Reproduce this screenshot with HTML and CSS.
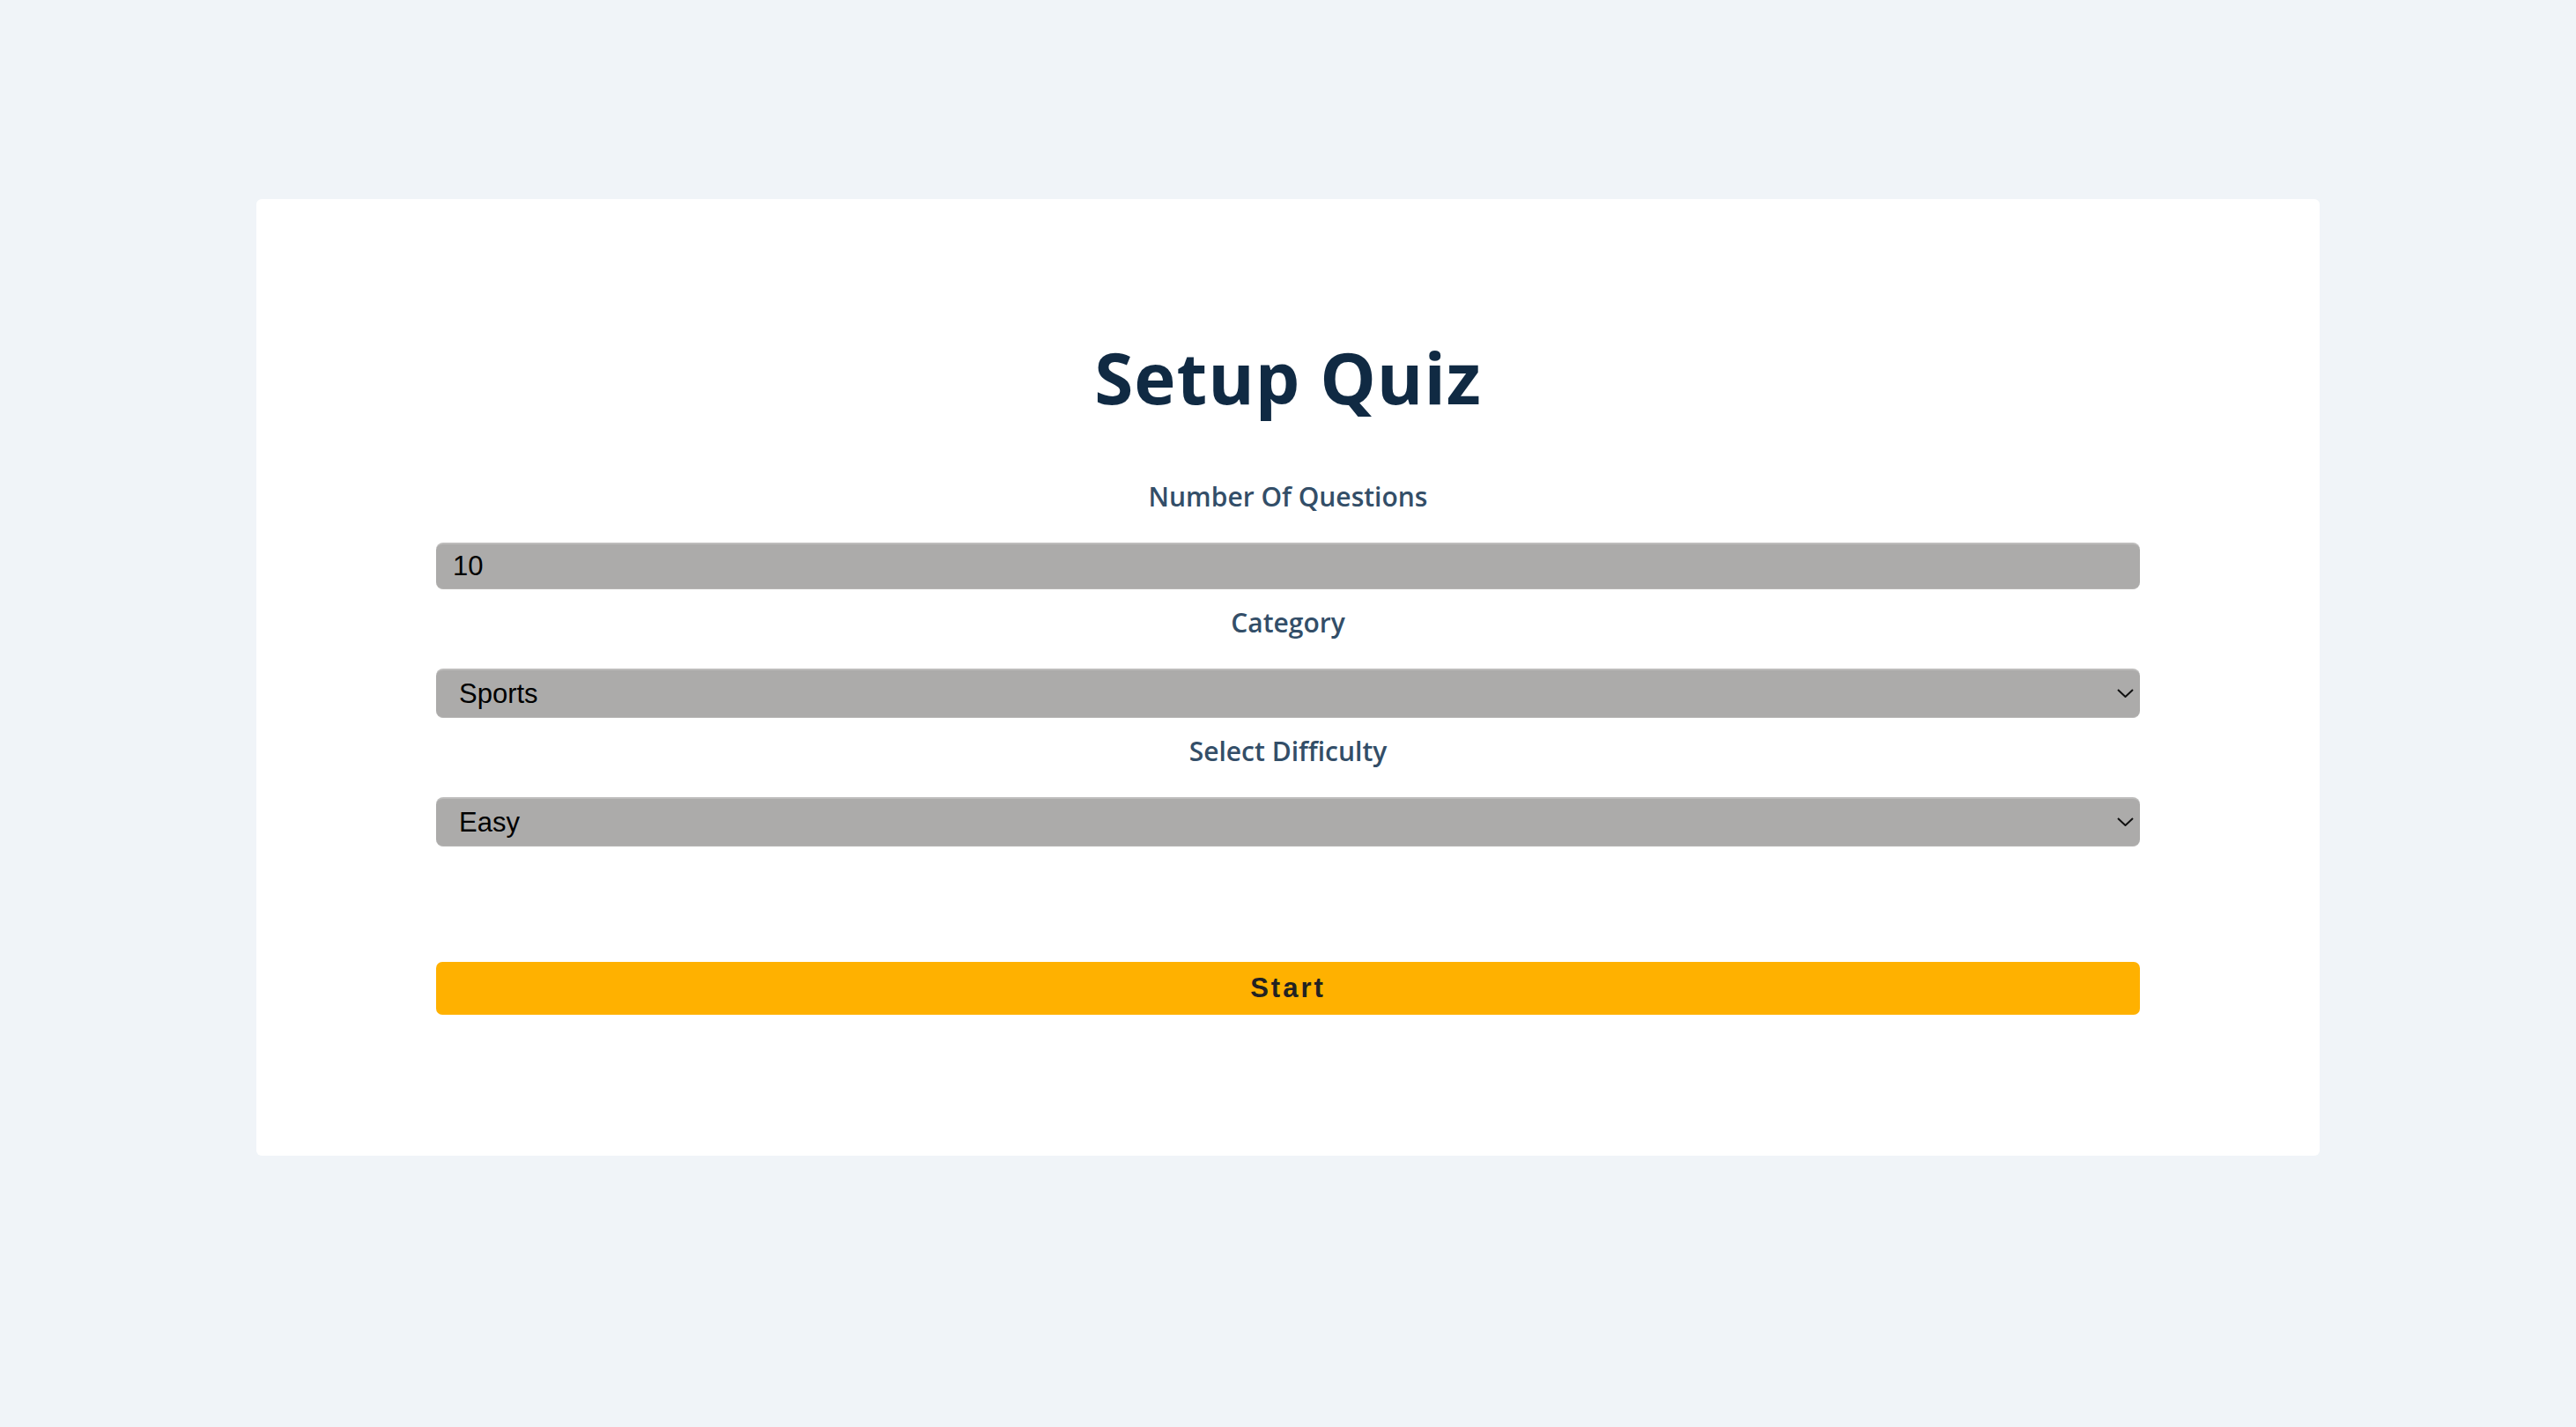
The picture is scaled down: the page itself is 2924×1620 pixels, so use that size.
FILE: index.html
```html
<!DOCTYPE html>
<html lang="en">
<head>
<meta charset="utf-8">
<title>Setup Quiz</title>
<link rel="stylesheet" href="styles.css">
</head>
<body>
<main class="page">
  <section class="quiz-card">
    <form class="setup-form">
      <h2 class="title">Setup Quiz</h2>
      <div class="form-control">
        <label class="label" for="amount">Number Of Questions</label>
        <input class="form-input" id="amount" type="text" value="10">
      </div>
      <div class="form-control">
        <label class="label" for="category">Category</label>
        <div class="select-wrap">
          <select class="form-input form-select" id="category">
            <option>Sports</option>
            <option>History</option>
            <option>Politics</option>
          </select>
          <svg class="chevron" viewBox="0 0 19 10" width="19" height="10" aria-hidden="true"><path d="M1 1 L9.5 9 L18 1" fill="none" stroke="#111" stroke-width="2"/></svg>
        </div>
      </div>
      <div class="form-control">
        <label class="label" for="difficulty">Select Difficulty</label>
        <div class="select-wrap">
          <select class="form-input form-select" id="difficulty">
            <option>Easy</option>
            <option>Medium</option>
            <option>Hard</option>
          </select>
          <svg class="chevron" viewBox="0 0 19 10" width="19" height="10" aria-hidden="true"><path d="M1 1 L9.5 9 L18 1" fill="none" stroke="#111" stroke-width="2"/></svg>
        </div>
      </div>
      <button type="button" class="submit-btn">Start</button>
    </form>
  </section>
</main>
</body>
</html>
```

FILE: styles.css
```css
* { box-sizing: border-box; }
html, body { margin: 0; padding: 0; }
body {
  background: #f0f4f8;
  font-family: "Open Sans", "Noto Sans", sans-serif;
}
.page {
  display: flex;
  justify-content: center;
  align-items: flex-start;
  padding-top: 226px;
  min-height: 1620px;
}
.quiz-card {
  width: 2342px;
  background: #ffffff;
  border-radius: 6px;
  padding: 147px 204px 160px;
}
.setup-form {
  display: flex;
  flex-direction: column;
}
.title {
  margin: 0 0 59px;
  text-align: center;
  font-family: "Open Sans", "Noto Sans", sans-serif;
  font-weight: 700;
  font-size: 80px;
  line-height: 110px;
  color: #102a43;
  letter-spacing: 1px;
}
.form-control {
  display: flex;
  flex-direction: column;
  margin-bottom: 16px;
}
.label {
  text-align: center;
  font-family: "Open Sans", "Noto Sans", sans-serif;
  font-size: 30px;
  line-height: 44px;
  font-weight: 600;
  color: #334e68;
  margin-bottom: 30px;
}
.form-input {
  display: block;
  width: 100%;
  height: 53px;
  border: none;
  border-top: 2px solid #bdbcbb;
  border-bottom: 1px solid #b6b5b4;
  border-radius: 8px;
  background: #acabaa;
  font-family: "Liberation Sans", Arial, sans-serif;
  font-size: 31px;
  color: #000;
  padding: 0 19px;
  outline: none;
}
.select-wrap {
  position: relative;
}
.form-select {
  height: 56px;
  padding-left: 26px;
  appearance: none;
  -webkit-appearance: none;
}
.chevron {
  position: absolute;
  right: 7px;
  top: 23px;
  pointer-events: none;
}
.submit-btn {
  margin-top: 115px;
  height: 60px;
  border: none;
  border-radius: 7px;
  background: #ffb100;
  font-family: "Liberation Sans", Arial, sans-serif;
  font-weight: 700;
  font-size: 31px;
  letter-spacing: 3px;
  color: #222;
  cursor: pointer;
}
```
